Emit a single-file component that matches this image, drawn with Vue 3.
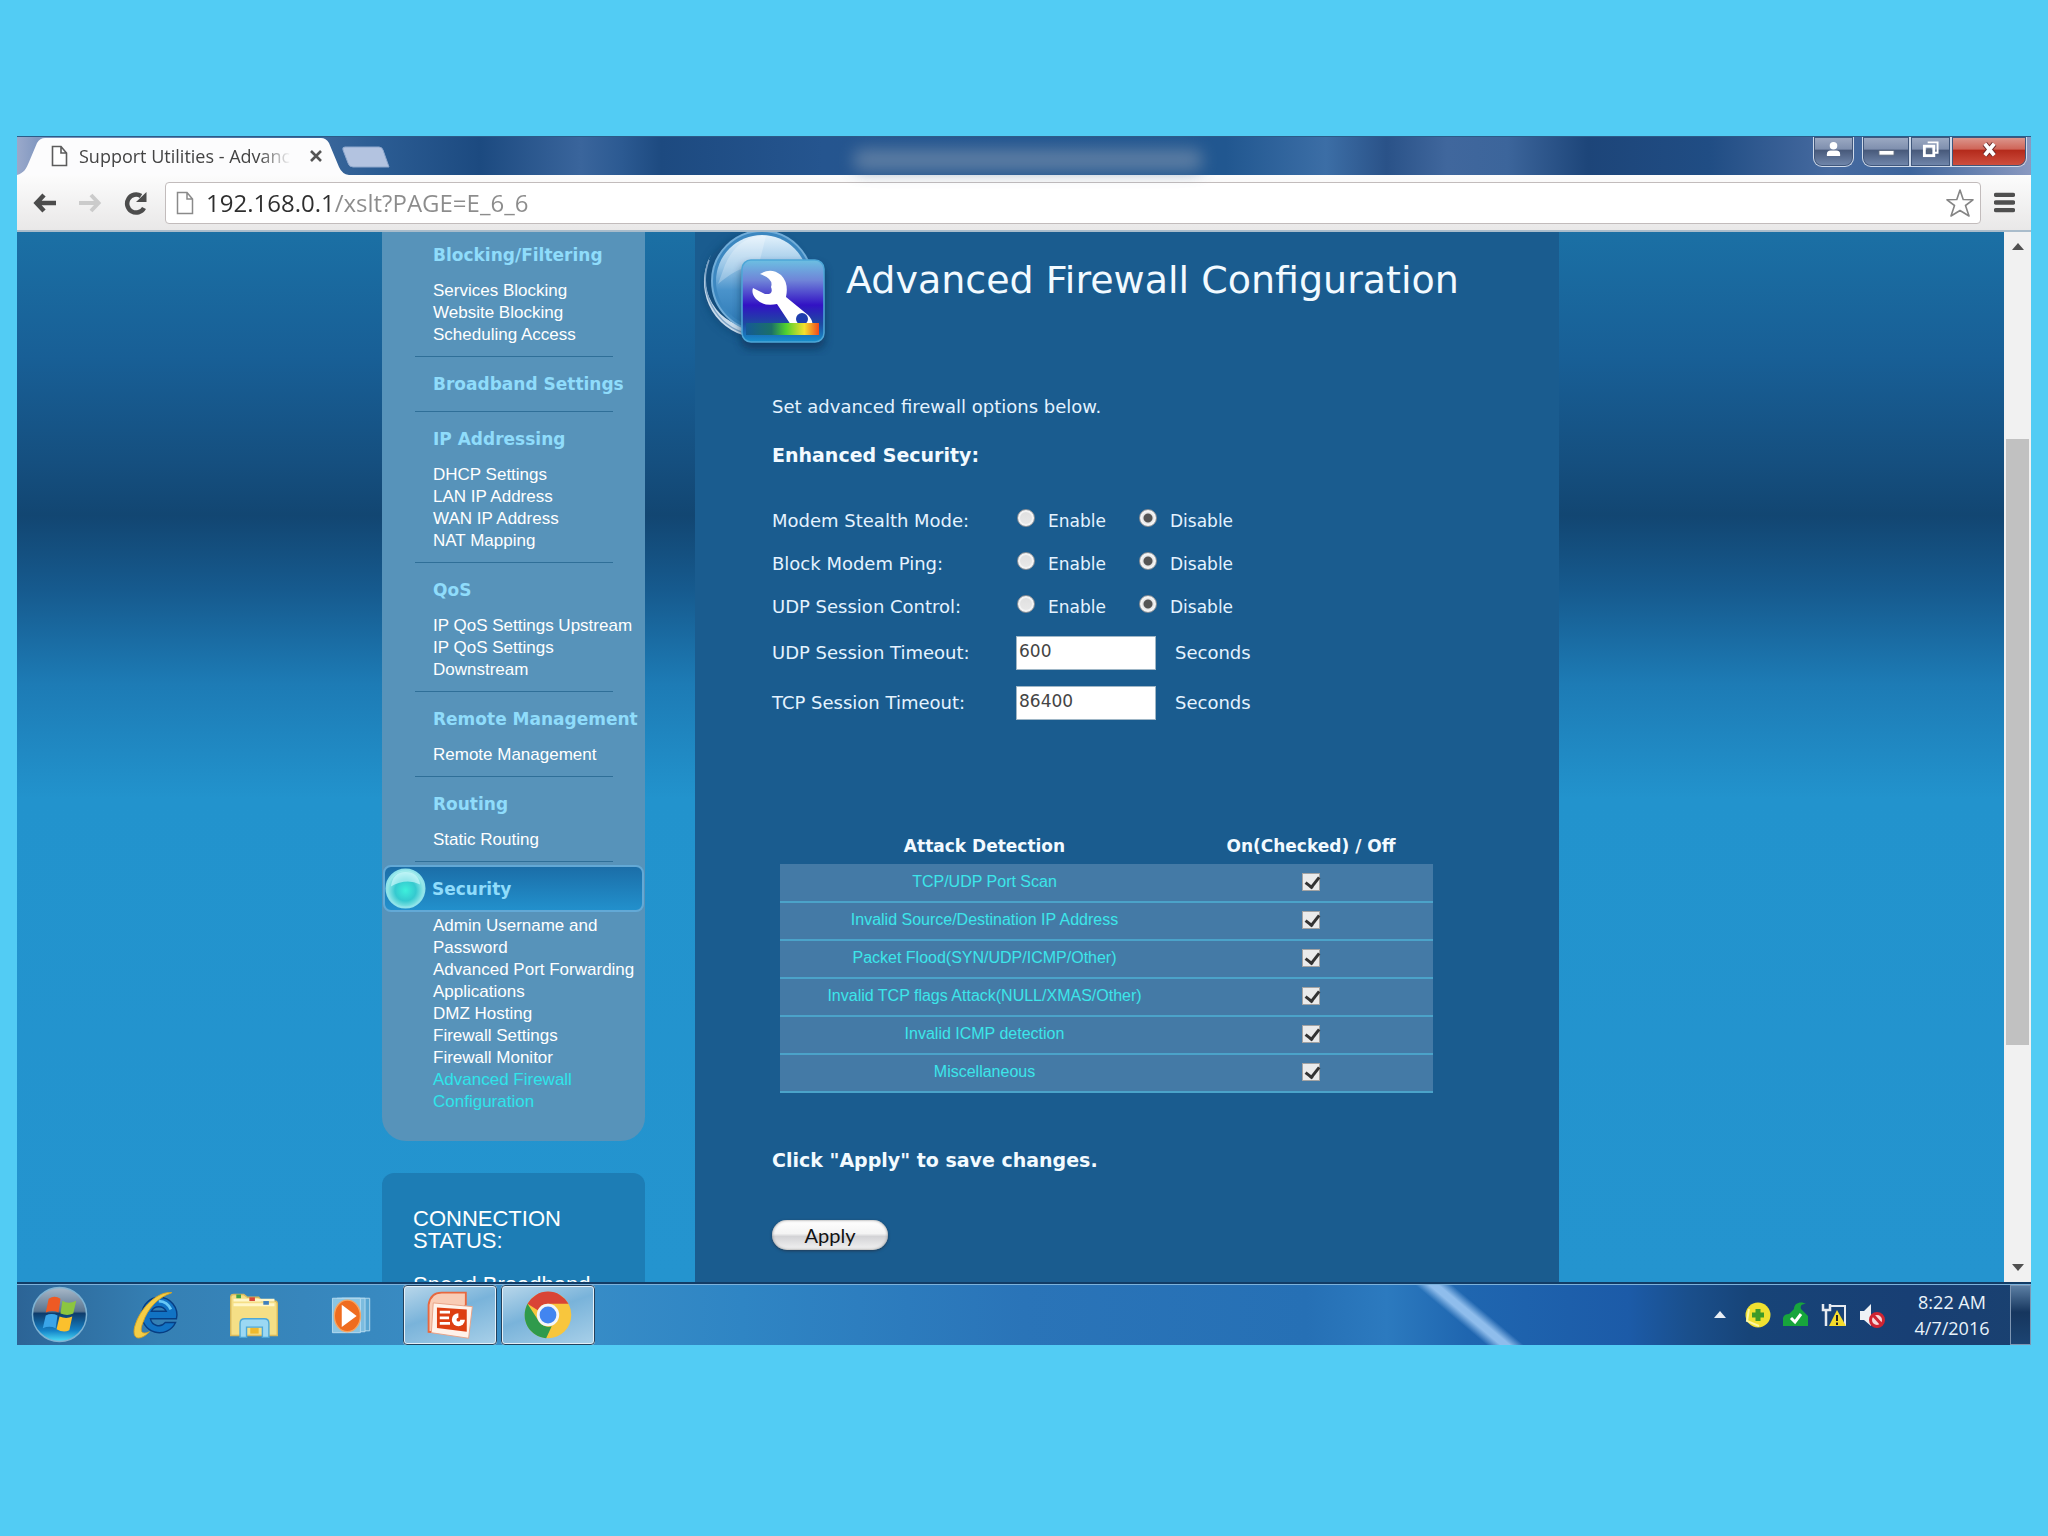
<template>
  <div class="desktop">
    <div class="window">
      <header class="titlebar">
        <div class="tab">
          <svg class="tab-shape" viewBox="0 0 332 38" preserveAspectRatio="none" aria-hidden="true">
            <path d="M0 38 C7 36 9 32 12 25 L20 6 Q23 1 28 1 H304 Q309 1 312 6 L322 30 Q325 37 332 38 Z" fill="#fcfcfd" />
          </svg>
          <svg class="tab-icon" viewBox="0 0 17 22" aria-hidden="true">
            <path d="M1.5 1.5H10L15.5 8V20.5H1.5Z M10 1.5V8H15.5" fill="#fff" stroke="#5c5c5c" stroke-width="1.6" />
          </svg>
          <span class="tab-title">Support Utilities - Advanced</span>
          <button class="tab-close" type="button" aria-label="Close tab">
            <svg viewBox="0 0 14 14"><path d="M2 2 12 12M12 2 2 12" stroke="#555" stroke-width="2.6" /></svg>
          </button>
        </div>
        <button class="new-tab" type="button" aria-label="New tab">
          <svg viewBox="0 0 48 22"><path d="M3 1H37Q40 1 41 4L47 21H11Q7 21 6 17L1 4Q0 1 3 1Z" fill="#b3c3e0" stroke="#8fa8cd" /></svg>
        </button>
        <span class="title-haze"></span>
        <div class="window-controls">
          <button class="control user" type="button" aria-label="User">
            <svg viewBox="0 0 18 18"><circle cx="9" cy="5" r="4" fill="#fff" /><path d="M2 16V14Q2 10 6 10H12Q16 10 16 14V16Z" fill="#fff" /></svg>
          </button>
          <div class="control-group">
            <button class="control" type="button" aria-label="Minimize">
              <svg viewBox="0 0 18 18"><path d="M1 10H17V15H1Z" fill="#fff" stroke="#59677c" /></svg>
            </button>
            <button class="control" type="button" aria-label="Restore">
              <svg viewBox="0 0 18 18">
                <path d="M6 1.5H16.5V12.5H13" fill="none" stroke="#fff" stroke-width="2" />
                <rect x="2.5" y="5.5" width="10" height="10" fill="none" stroke="#fff" stroke-width="3" />
                <rect x="5" y="8" width="5" height="5" fill="#59677c" />
              </svg>
            </button>
            <button class="control close" type="button" aria-label="Close">
              <svg viewBox="0 0 18 18"><path d="M4 3 14 15M14 3 4 15" stroke="#6d2c2c" stroke-width="6" /><path d="M4 3 14 15M14 3 4 15" stroke="#fff" stroke-width="4" /></svg>
            </button>
          </div>
        </div>
      </header>

      <div class="toolbar">
        <button class="nav-button" type="button" aria-label="Back">
          <svg viewBox="0 0 24 24"><path d="M11 4 3.5 12 11 20M4 12H23" fill="none" stroke="#4c4c4c" stroke-width="4.5" /></svg>
        </button>
        <button class="nav-button" type="button" aria-label="Forward">
          <svg viewBox="0 0 24 24"><path d="M13 4 20.5 12 13 20M20 12H1" fill="none" stroke="#cbcbcb" stroke-width="4" /></svg>
        </button>
        <button class="nav-button" type="button" aria-label="Reload">
          <svg viewBox="0 0 24 24">
            <path d="M21 17A9 9 0 1 1 18 5" fill="none" stroke="#4c4c4c" stroke-width="4.5" />
            <path d="M23.5 1V11H13Z" fill="#4c4c4c" />
          </svg>
        </button>
        <div class="omnibox">
          <svg class="page-icon" viewBox="0 0 18 24" aria-hidden="true">
            <path d="M1.5 1.5H11L16.5 8V22.5H1.5Z M11 1.5V8H16.5" fill="#fff" stroke="#8a8a8a" stroke-width="1.5" />
          </svg>
          <input v-model="address" class="address" type="text" aria-label="Address" />
          <button class="bookmark" type="button" aria-label="Bookmark this page">
            <svg viewBox="0 0 28 28">
              <path d="M14 1 17.2 10.5 27 10.8 19.5 16.5 23 27 14 21.5 5 27 8.5 16.5 1 10.8 10.8 10.5Z" fill="#fff" stroke="#858585" stroke-width="1.6" stroke-linejoin="round" />
            </svg>
          </button>
        </div>
        <button class="nav-button menu" type="button" aria-label="Menu">
          <svg viewBox="0 0 22 22"><path d="M2 3H20M2 11H20M2 19H20" stroke="#4f4f4f" stroke-width="4.5" stroke-linecap="round" /></svg>
        </button>
      </div>

      <div class="viewport">
        <div class="page">
          <div class="site">
            <aside class="sidebar">
              <nav class="menu-panel">
                <section v-for="group in menu" :key="group.title" class="menu-group" :class="{ active: group.active }">
                  <h2>
                    <svg v-if="group.active" class="orb" viewBox="0 0 42 42" aria-hidden="true">
                      <defs>
                        <radialGradient id="orbFill" cx="50%" cy="55%" r="55%">
                          <stop offset="0" stop-color="#3df0dc" />
                          <stop offset="0.5" stop-color="#35c9cf" />
                          <stop offset="1" stop-color="#b9f3f2" />
                        </radialGradient>
                      </defs>
                      <circle cx="21" cy="21" r="19.5" fill="url(#orbFill)" stroke="#8fe3ea" stroke-width="2" />
                      <path d="M6 19Q8 4 21 4T36 17Q22 10 6 19Z" fill="#d9fbff" opacity="0.6" />
                    </svg>
                    {{ group.title }}
                  </h2>
                  <ul v-if="group.links.length">
                    <li v-for="link in group.links" :key="link">
                      <a href="#" :class="{ current: link === currentPage }">{{ link }}</a>
                    </li>
                  </ul>
                </section>
              </nav>
              <section class="status-panel">
                <h2>CONNECTION STATUS:</h2>
                <p>Speed Broadband</p>
              </section>
            </aside>

            <main class="content">
              <header class="content-header">
                <svg class="page-logo" viewBox="0 0 138 128" aria-hidden="true">
                  <defs>
                    <linearGradient id="glass" x1="0" y1="0" x2="0" y2="1">
                      <stop offset="0" stop-color="#e4f2fc" />
                      <stop offset="0.35" stop-color="#96c4e6" />
                      <stop offset="0.6" stop-color="#4a93cb" />
                      <stop offset="1" stop-color="#2c78b4" />
                    </linearGradient>
                    <linearGradient id="tile" x1="0" y1="0" x2="0" y2="1">
                      <stop offset="0" stop-color="#6cc0e2" />
                      <stop offset="0.25" stop-color="#6f84d8" />
                      <stop offset="0.55" stop-color="#3212c4" />
                      <stop offset="0.78" stop-color="#1d4aa0" />
                      <stop offset="1" stop-color="#1790cc" />
                    </linearGradient>
                    <linearGradient id="rainbow">
                      <stop offset="0" stop-color="#145a96" />
                      <stop offset="0.35" stop-color="#1b7068" />
                      <stop offset="0.55" stop-color="#4fd02f" />
                      <stop offset="0.8" stop-color="#f4e02c" />
                      <stop offset="1" stop-color="#f0481c" />
                    </linearGradient>
                    <filter id="soft"><feGaussianBlur stdDeviation="4" /></filter>
                  </defs>
                  <circle cx="56" cy="58" r="53" fill="#0d3e69" opacity="0.5" filter="url(#soft)" />
                  <path d="M12 25A56 56 0 0 0 50 109L56 100A50 50 0 0 1 12 25Z" fill="#c9dcec" />
                  <path d="M9 32A56 56 0 0 0 48 106" fill="none" stroke="#7fa4c6" stroke-width="1.5" />
                  <circle cx="62" cy="53" r="50" fill="#3c87c0" stroke="#71add9" stroke-width="2" />
                  <circle cx="62" cy="53" r="46" fill="url(#glass)" />
                  <path d="M25 37Q38 7 66 8L58 40Q44 34 18 56Z" fill="#fff" opacity="0.25" />
                  <rect x="41" y="37" width="84" height="84" rx="9" fill="#072a50" opacity="0.6" filter="url(#soft)" />
                  <rect x="42" y="32" width="82" height="82" rx="9" fill="url(#tile)" stroke="#4da6d8" stroke-width="1.5" />
                  <path d="M60 46Q71 39 81 47Q89 55 86 69L108 87Q114 93 112 100Q107 108 95 104Q92 100 91 97L77 76Q64 79 56 71Q51 65 53 60L65 66Q74 67 71 59Q74 51 60 46Z" fill="#fff" />
                  <circle cx="102" cy="91" r="6" fill="#1f3eae" />
                  <rect x="46" y="95" width="73" height="12" fill="url(#rainbow)" />
                </svg>
                <h1>{{ currentPage }}</h1>
              </header>

              <form class="firewall-form" @submit.prevent>
                <p class="intro">Set advanced firewall options below.</p>
                <h3>Enhanced Security:</h3>

                <div v-for="mode in modes" :key="mode.id" class="setting-row" role="radiogroup" :aria-labelledby="mode.id">
                  <span :id="mode.id" class="setting-label">{{ mode.label }}</span>
                  <label v-for="option in ['Enable', 'Disable']" :key="option" class="option">
                    <input v-model="mode.value" type="radio" :name="mode.id" :value="option" />
                    {{ option }}
                  </label>
                </div>

                <div v-for="timeout in timeouts" :key="timeout.id" class="setting-row tall">
                  <label class="setting-label" :for="timeout.id">{{ timeout.label }}</label>
                  <input :id="timeout.id" v-model="timeout.value" class="seconds-input" type="text" />
                  <span>Seconds</span>
                </div>

                <table class="attacks">
                  <thead>
                    <tr>
                      <th>Attack Detection</th>
                      <th>On(Checked) / Off</th>
                    </tr>
                  </thead>
                  <tbody>
                    <tr v-for="attack in attacks" :key="attack.label">
                      <td>{{ attack.label }}</td>
                      <td><input v-model="attack.on" type="checkbox" :aria-label="attack.label" /></td>
                    </tr>
                  </tbody>
                </table>

                <h3 class="apply-hint">Click "Apply" to save changes.</h3>
                <button class="apply" type="submit">Apply</button>
              </form>
            </main>
          </div>
        </div>
        <div class="scrollbar">
          <button type="button" aria-label="Scroll up"><svg viewBox="0 0 12 8"><path d="M6 1 12 8H0Z" fill="#505050" /></svg></button>
          <div class="track"><div class="thumb"></div></div>
          <button type="button" aria-label="Scroll down"><svg viewBox="0 0 12 8"><path d="M0 0H12L6 7Z" fill="#505050" /></svg></button>
        </div>
      </div>

      <footer class="taskbar">
        <button class="task start" type="button" aria-label="Start">
          <svg viewBox="0 0 58 58">
            <defs>
              <linearGradient id="startFill" x1="0" y1="0" x2="0" y2="1">
                <stop offset="0" stop-color="#a9b9c9" />
                <stop offset="0.44" stop-color="#5a7590" />
                <stop offset="0.48" stop-color="#0e3c6c" />
                <stop offset="0.8" stop-color="#1583c8" />
                <stop offset="1" stop-color="#4fe0f8" />
              </linearGradient>
            </defs>
            <circle cx="29" cy="29" r="27.5" fill="url(#startFill)" stroke="#7fb3d3" stroke-width="1.5" />
            <path d="M18 13Q24 9 30 13L28 27Q22 24 15 27Z" fill="#ee5a24" />
            <path d="M32 15Q38 19 46 15L43 28Q37 31 30 28Z" fill="#8cc63f" />
            <path d="M15 30Q21 27 27 30L25 43Q19 40 12 43Z" fill="#3aa5e8" />
            <path d="M29 31Q36 34 42 31L39 45Q33 48 26 44Z" fill="#fbc02d" />
          </svg>
        </button>
        <button class="task" type="button" aria-label="Internet Explorer">
          <svg viewBox="0 0 58 58">
            <path d="M32 10A19 19 0 1 0 50 37H39A9 9 0 0 1 23 33H51A19 19 0 0 0 32 10ZM24 25A9 9 0 0 1 40 25Z" fill="#1173c4" stroke="#073e83" stroke-width="1.5" />
            <path d="M32 14A15 15 0 0 1 45 23" fill="none" stroke="#67c8f6" stroke-width="3" />
            <path d="M46 5C32 3 12 20 6 42C3 56 12 57 22 47C13 51 11 46 15 37C20 22 31 10 46 5Z" fill="#f3cd46" stroke="#d7a524" />
          </svg>
        </button>
        <button class="task" type="button" aria-label="Windows Explorer">
          <svg viewBox="0 0 58 58">
            <path d="M4 51V10Q4 7 7 7H18L22 10H34L37 14H51Q54 14 54 17V51Z" fill="#f5df86" stroke="#d9b95b" stroke-width="1.5" />
            <path d="M7 13H51M7 18H51" stroke="#fff6c8" stroke-width="3" />
            <path d="M10 9H15" stroke="#3da348" stroke-width="4" /><path d="M24 12H30" stroke="#d6473b" stroke-width="4" /><path d="M39 16H45" stroke="#3f7fbd" stroke-width="4" />
            <path d="M14 53V38Q14 33 19 33H40Q45 33 45 38V53H38V42H21V53Z" fill="#9bd8f4" stroke="#4ca7d8" stroke-width="1.5" />
            <rect x="25" y="43" width="9" height="6" fill="#efb92e" />
          </svg>
        </button>
        <button class="task" type="button" aria-label="Windows Media Player">
          <svg viewBox="0 0 58 58">
            <path d="M18 11H48V46H18Z" fill="#5aa7d3" stroke="#b7dcf0" />
            <path d="M13 11H43V47H13Z" fill="#7cbcdf" stroke="#b7dcf0" />
            <path d="M8 11H38V48H8Z" fill="#8ac5e3" stroke="#b7dcf0" />
            <ellipse cx="24" cy="30" rx="14" ry="17" fill="#ef6c1f" stroke="#f7a561" stroke-width="1.5" />
            <path d="M18 18 34 30 18 42Z" fill="#fff" />
          </svg>
        </button>
        <button class="task running" type="button" aria-label="PowerPoint">
          <svg viewBox="0 0 58 58">
            <path d="M6 47V18Q8 5 20 5H46V18L20 48Z" fill="#f9ccb5" stroke="#e8683f" stroke-width="2" />
            <path d="M11 16 53 20 49 54 9 48Z" fill="#fff2ea" stroke="#e9a184" />
            <path d="M15 21 47 23V47L15 43Z" fill="#dd3f12" />
            <path d="M18 26H29M18 32H28M18 38H29" stroke="#fff" stroke-width="3" />
            <circle cx="38" cy="34" r="7" fill="#fff" /><path d="M38 34V26Q46 27 46 34Z" fill="#dd3f12" /><circle cx="38" cy="34" r="2" fill="#dd3f12" />
          </svg>
        </button>
        <button class="task running" type="button" aria-label="Google Chrome">
          <svg viewBox="0 0 58 58">
            <circle cx="29" cy="29" r="25" fill="#f8c63d" />
            <path d="M7 17A25 25 0 0 1 51 17H29A12 12 0 0 0 18 24Z" fill="#d94436" />
            <path d="M7 17 18.6 35A12 12 0 0 0 33 41L27 54A25 25 0 0 1 7 17Z" fill="#2f9a4c" />
            <circle cx="29" cy="29" r="12" fill="#f3f5f8" />
            <circle cx="29" cy="29" r="9" fill="#4285f0" />
          </svg>
        </button>
        <div class="tray">
          <svg class="tray-arrow" viewBox="0 0 12 7" aria-hidden="true"><path d="M6 0 12 7H0Z" fill="#e8eef5" /></svg>
          <svg viewBox="0 0 28 28" aria-hidden="true">
            <circle cx="14" cy="14" r="12.5" fill="#f0e130" />
            <path d="M5 8 3 20 15 25" fill="none" stroke="#fbf7a4" stroke-width="2" />
            <path d="M14 8V20M8 14H20" stroke="#3f9a28" stroke-width="5" />
          </svg>
          <svg viewBox="0 0 28 28" aria-hidden="true">
            <path d="M1 25V17Q2 13 7 13L12 8C12 1 20 0 24 3C20 3 18 4 19 8L26 15V25Z" fill="#17a53c" />
            <path d="M9 17 13 21 19 13" fill="none" stroke="#fff" stroke-width="3" />
          </svg>
          <svg viewBox="0 0 28 28" aria-hidden="true">
            <path d="M10 5H25V24H12" fill="none" stroke="#e6eaf0" stroke-width="2" />
            <path d="M3 3V9H10V3M6 9V25" fill="none" stroke="#e6eaf0" stroke-width="2.5" />
            <path d="M17 9 26 25H9Z" fill="#f6dc2b" /><path d="M17 14V20M17 21.5V24" stroke="#222" stroke-width="2" />
          </svg>
          <svg viewBox="0 0 28 28" aria-hidden="true">
            <path d="M2 10H6L13 3V25L6 19H2Z" fill="#eef1f5" />
            <circle cx="19" cy="19" r="6.5" fill="#f6dada" stroke="#cf2532" stroke-width="3" /><path d="M15 14 24 24" stroke="#cf2532" stroke-width="3" />
          </svg>
          <time class="clock"><span>8:22 AM</span><span>4/7/2016</span></time>
          <button class="show-desktop" type="button" aria-label="Show desktop"></button>
        </div>
      </footer>
    </div>
  </div>
</template>

<script setup>
import { ref } from 'vue';

const address = ref('192.168.0.1/xslt?PAGE=E_6_6');
const currentPage = 'Advanced Firewall Configuration';

const menu = [
  { title: 'Blocking/Filtering', links: ['Services Blocking', 'Website Blocking', 'Scheduling Access'] },
  { title: 'Broadband Settings', links: [] },
  { title: 'IP Addressing', links: ['DHCP Settings', 'LAN IP Address', 'WAN IP Address', 'NAT Mapping'] },
  { title: 'QoS', links: ['IP QoS Settings Upstream', 'IP QoS Settings Downstream'] },
  { title: 'Remote Management', links: ['Remote Management'] },
  { title: 'Routing', links: ['Static Routing'] },
  {
    title: 'Security',
    active: true,
    links: [
      'Admin Username and Password',
      'Advanced Port Forwarding',
      'Applications',
      'DMZ Hosting',
      'Firewall Settings',
      'Firewall Monitor',
      'Advanced Firewall Configuration',
    ],
  },
];

const modes = ref([
  { id: 'stealth', label: 'Modem Stealth Mode:', value: 'Disable' },
  { id: 'ping', label: 'Block Modem Ping:', value: 'Disable' },
  { id: 'udp-control', label: 'UDP Session Control:', value: 'Disable' },
]);

const timeouts = ref([
  { id: 'udp-timeout', label: 'UDP Session Timeout:', value: '600' },
  { id: 'tcp-timeout', label: 'TCP Session Timeout:', value: '86400' },
]);

const attacks = ref([
  { label: 'TCP/UDP Port Scan', on: true },
  { label: 'Invalid Source/Destination IP Address', on: true },
  { label: 'Packet Flood(SYN/UDP/ICMP/Other)', on: true },
  { label: 'Invalid TCP flags Attack(NULL/XMAS/Other)', on: true },
  { label: 'Invalid ICMP detection', on: true },
  { label: 'Miscellaneous', on: true },
]);
</script>

<style>
body {
  margin: 0;
  background: #52ccf4;
}
</style>

<style scoped>
* {
  box-sizing: border-box;
}

h1,
h2,
h3,
p,
ul {
  margin: 0;
  padding: 0;
}

button {
  border: none;
  padding: 0;
  background: none;
  cursor: pointer;
}

svg {
  display: block;
}

.desktop {
  height: 100vh;
  padding: 136px 17px 191px;
  background: #52ccf4;
}

.window {
  height: 100%;
  display: flex;
  flex-direction: column;
  overflow: hidden;
}

/* title bar */
.titlebar {
  flex: none;
  height: 39px;
  display: flex;
  align-items: flex-start;
  background: linear-gradient(90deg, #9aa9cb 0, #8298c0 1%, #2b5c93 18%, #1c4a80 23%, #3a659c 28%, #2c5a92 30%, #1d4a80 32%, #25558f 40%, #215790 60%, #3c6ea6 65%, #2a5288 68%, #40679d 71%, #3c659b 74%, #1d4579 78%, #204d84 84%, #466aa0 90%, #3d659c 94%, #8a99c0 100%);
  border-top: 1px solid #2b5b87;
}

.tab {
  position: relative;
  width: 332px;
  height: 38px;
  display: flex;
  align-items: center;
  padding: 0 19px 0 34px;
}

.tab-shape {
  position: absolute;
  inset: 0;
  width: 100%;
  height: 100%;
}

.tab-icon {
  position: relative;
  width: 17px;
  height: 22px;
  margin-right: 11px;
}

.tab-title {
  position: relative;
  flex: 1;
  overflow: hidden;
  white-space: nowrap;
  font: 18px/24px "Open Sans", sans-serif;
  color: #444;
  mask-image: linear-gradient(90deg, #000 85%, transparent);
}

.tab-close {
  position: relative;
  width: 14px;
  height: 14px;
  margin: 0 7px 0 18px;
}

.new-tab {
  width: 48px;
  height: 22px;
  margin: 9px 0 0 -7px;
}

.title-haze {
  width: 350px;
  height: 22px;
  margin: 12px auto 0 23%;
  border-radius: 10px;
  background: #6b87a8;
  opacity: 0.8;
  filter: blur(8px);
}

.window-controls {
  display: flex;
  gap: 8px;
  margin-right: 4px;
}

.control-group {
  display: flex;
}

.control {
  width: 41px;
  height: 30px;
  display: flex;
  justify-content: center;
  padding-top: 4px;
  border: 1px solid #cfdaea;
  border-top: none;
  background: linear-gradient(#9dabc4 0, #7f8fae 42%, #47597a 45%, #7288ad 100%);
  box-shadow: inset 0 0 0 1px #40577c;
}

.control svg {
  width: 17px;
  height: 17px;
}

.control.user {
  border-radius: 0 0 9px 9px;
}

.control-group .control:first-child {
  width: 48px;
  border-radius: 0 0 0 9px;
}

.control-group .control.close {
  width: 76px;
  border-radius: 0 0 9px 0;
  background: linear-gradient(#dc9a91 0, #cf6558 42%, #b42a1b 45%, #cf5040 100%);
}

/* toolbar */
.toolbar {
  flex: none;
  height: 57px;
  display: flex;
  align-items: center;
  gap: 21px;
  padding: 0 16px;
  background: linear-gradient(#fcfcfc, #e9e8e8);
  border-bottom: 2px solid #a9bccb;
}

.nav-button {
  flex: none;
  width: 24px;
  height: 24px;
}

.nav-button.menu {
  width: 21px;
  height: 21px;
  margin-left: -8px;
}

.omnibox {
  flex: 1;
  min-width: 0;
  height: 42px;
  display: flex;
  align-items: center;
  gap: 12px;
  margin-left: -3px;
  padding: 0 6px 0 10px;
  border: 1px solid #c2bcbc;
  border-radius: 4px;
  background: #fff;
}

.page-icon {
  flex: none;
  width: 18px;
  height: 24px;
}

.address {
  flex: 1;
  min-width: 0;
  height: 38px;
  padding: 0;
  border: none;
  outline: none;
  font: 24px "Open Sans", sans-serif;
  color: transparent;
  /* host part is darker than the path */
  background: linear-gradient(90deg, #2e2e2e 129px, #8c8c8c 129px);
  background-clip: text;
}

.bookmark {
  width: 28px;
  height: 28px;
}

/* page */
.viewport {
  flex: 1;
  min-height: 0;
  display: flex;
  overflow: hidden;
}

.page {
  flex: 1;
  min-width: 0;
  overflow: hidden;
  background: linear-gradient(#1b70a5 0, #185f96 12%, #154f7f 22%, #124672 27%, #165a8e 34%, #1d7bb5 43%, #2293cd 54%, #2494cf 100%);
}

.site {
  display: flex;
  gap: 50px;
  width: 1257px;
  max-width: 100%;
  margin: -4px auto 0;
}

.sidebar {
  flex: none;
  width: 263px;
  font-family: "Liberation Sans", Arial, sans-serif;
  color: #fff;
}

.menu-panel {
  padding-bottom: 18px;
  border-radius: 0 0 24px 24px;
  background: #5793ba;
}

.menu-group h2 {
  padding: 16px 0 14px 51px;
  font: bold 17px/22px "DejaVu Sans", Verdana, sans-serif;
  color: #8fdcfb;
  white-space: nowrap;
}

.menu-group h2:last-child {
  padding-bottom: 16px;
}

.menu-group:not(.active)::after {
  content: "";
  display: block;
  height: 1px;
  margin: 0 32px 0 33px;
  background: #2f6f98;
}

.menu-group ul {
  padding: 0 0 10px 51px;
  list-style: none;
}

.menu-group a {
  display: block;
  font-size: 17px;
  line-height: 22px;
  color: #fff;
  text-decoration: none;
}

.menu-group a.current {
  color: #2fe5ea;
}

.menu-group.active h2 {
  display: flex;
  align-items: center;
  gap: 6px;
  height: 47px;
  margin: 3px 1px;
  padding: 0;
  border: 2px solid #63a9d6;
  border-radius: 8px;
  background: linear-gradient(#1b6ea8, #2290cc);
}

.orb {
  width: 41px;
  height: 41px;
}

.status-panel {
  min-height: 200px;
  margin-top: 32px;
  padding: 35px 31px;
  border-radius: 12px;
  background: #1d7db5;
  font-size: 22px;
  line-height: 22px;
}

.status-panel h2 {
  font-size: 22px;
  font-weight: normal;
}

.status-panel p {
  margin-top: 22px;
}

.content {
  flex: none;
  width: 864px;
  background: #1a5c8f;
  color: #e4f3ff;
  font: 18px/24px "DejaVu Sans", Verdana, sans-serif;
}

.content-header {
  height: 124px;
  display: flex;
  align-items: flex-start;
  gap: 8px;
  padding-left: 5px;
}

.page-logo {
  flex: none;
  width: 138px;
  height: 128px;
}

.content-header h1 {
  margin-top: 30px;
  font-size: 38px;
  line-height: 44px;
  font-weight: normal;
  white-space: nowrap;
  color: #f2faff;
}

.firewall-form {
  padding: 43px 77px 60px;
}

.firewall-form h3 {
  margin: 24px 0 32px;
  font-size: 19px;
  line-height: 24px;
  color: #f2faff;
}

.setting-row {
  height: 43px;
  display: flex;
  align-items: center;
}

.setting-row.tall {
  height: 50px;
}

.setting-label {
  width: 244px;
}

.option {
  width: 122px;
  display: flex;
  align-items: center;
  gap: 13px;
  font-size: 17px;
}

.option input {
  appearance: none;
  width: 18px;
  height: 18px;
  margin: 0 0 6px 1px;
  border: 1px solid #8b9096;
  border-radius: 50%;
  background: linear-gradient(#dfdfdf, #e9e9e9);
  box-shadow: inset 0 0 0 2px #f4f4f4;
}

.option input:checked {
  background: radial-gradient(circle, #555 4px, #e6e6e6 5px);
}

.seconds-input {
  width: 140px;
  height: 34px;
  margin-right: 19px;
  padding: 0 2px 4px;
  border: 1px solid #9fb6c6;
  background: #fff;
  color: #444;
  font: 17px "DejaVu Sans", Verdana, sans-serif;
}

.attacks {
  width: 653px;
  margin: 99px 0 0 8px;
  border-collapse: collapse;
  table-layout: fixed;
  text-align: center;
}

.attacks th {
  height: 37px;
  padding: 0;
  font-size: 17px;
  color: #f2faff;
}

.attacks th:first-child {
  width: 409px;
}

.attacks td {
  height: 38px;
  padding: 0 0 2px;
  border-bottom: 2px solid #4ba3c9;
  background: #447aa6;
  font: 16px "Liberation Sans", Arial, sans-serif;
  color: #3ce6ea;
}

.attacks input {
  appearance: none;
  display: block;
  width: 18px;
  height: 18px;
  margin: 0 auto;
  border: 1px solid #a3a3a3;
  background: #ebebeb;
}

.attacks input:checked::before {
  content: "";
  display: block;
  width: 6px;
  height: 11px;
  margin: 0 0 0 5px;
  border: solid #333;
  border-width: 0 3px 3px 0;
  transform: rotate(38deg);
}

.firewall-form .apply-hint {
  margin: 55px 0 48px;
}

.apply {
  display: block;
  width: 116px;
  height: 30px;
  border-radius: 15px;
  background: linear-gradient(#fff 0, #f4f4f4 45%, #d3d3d6 55%, #f3f3f3 100%);
  box-shadow: 0 1px 3px #223b55, inset 0 0 3px #888;
  font: 20px/30px Lato, sans-serif;
  color: #111;
}

.scrollbar {
  flex: none;
  width: 27px;
  display: flex;
  flex-direction: column;
  background: #f1f1f1;
}

.scrollbar button {
  height: 28px;
  display: grid;
  place-items: center;
}

.scrollbar button svg {
  width: 12px;
  height: 8px;
}

.track {
  flex: 1;
  padding: 0 2px;
}

/* page is scrolled partway down */
.track::before {
  content: "";
  display: block;
  height: 18%;
}

.thumb {
  height: 61%;
  background: #c1c1c1;
}

/* taskbar */
.taskbar {
  flex: none;
  height: 63px;
  display: flex;
  align-items: center;
  gap: 4px;
  border-top: 2px solid #123c66;
  box-shadow: inset 0 1px 0 #7cb2dc;
  background:
    linear-gradient(40deg, transparent 42%, #8fbdec 48%, #8fbdec 52%, transparent 58%) 74% 0 / 160px 100% no-repeat,
    linear-gradient(90deg, #2c6496 0, #3580b4 7%, #3a8fc8 25%, #2f85c4 36%, #2a74b8 50%, #2670b5 64%, #2c7abf 68%, #1f66b0 72%, #1c5ba8 80%, #1a4f8c 83%, #174478 86%, #183f74 94%, #1a4170 100%);
}

.task {
  width: 94px;
  height: 60px;
  display: grid;
  place-items: center;
  border-radius: 4px;
}

.task svg {
  width: 54px;
  height: 54px;
}

.task.start {
  width: 84px;
  margin-right: 4px;
}

.task.start svg {
  width: 57px;
  height: 57px;
}

.task.running {
  border: 2px solid #e4f0f8;
  outline: 1px solid #22415d;
  outline-offset: -1px;
  background: linear-gradient(160deg, #b7d6ea, #79b3da 45%, #a7cfe8);
}

.tray {
  align-self: stretch;
  display: flex;
  align-items: center;
  gap: 10px;
  margin-left: auto;
}

.tray svg {
  width: 28px;
  height: 28px;
}

.tray svg.tray-arrow {
  width: 12px;
  height: 7px;
  margin-right: 8px;
}

.clock {
  width: 88px;
  margin: 0 4px 0 12px;
  display: flex;
  flex-direction: column;
  text-align: center;
  font: 18px/26px "Open Sans", sans-serif;
  color: #e9f3fb;
}

.show-desktop {
  width: 21px;
  height: 60px;
  border: 1px solid #7d95b2;
  background: linear-gradient(#5b7ea3, #16365e 45%, #1c4472);
}
</style>
